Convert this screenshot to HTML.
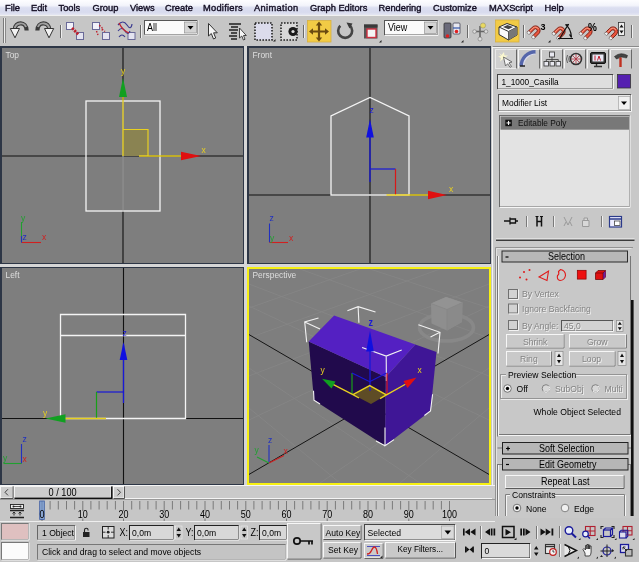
<!DOCTYPE html>
<html><head><meta charset="utf-8">
<style>
*{margin:0;padding:0;box-sizing:border-box}
html,body{width:639px;height:562px;overflow:hidden;background:#c6c6c6}
body{position:relative;filter:blur(.45px);font-family:"Liberation Sans",sans-serif;font-size:8.6px;color:#000}
.a{position:absolute;white-space:nowrap}
#menu{left:0;top:0;width:639px;height:15px;background:linear-gradient(#fdfdff 0%,#f3f4fb 36%,#dbdef0 52%,#d8dbee 82%,#e4e6f2 100%)}
#menu span{position:absolute;top:2.6px;font-size:9.3px;line-height:10px;color:#10101e;-webkit-text-stroke:.38px #140c24}
#tb{left:0;top:15px;width:639px;height:31px;background:#c6c6c6;border-top:1px solid #f0f0f0}
#vp{left:0;top:46px;width:491px;height:439px;background:#2d3646}
.v{position:absolute;background:#7e7e7e}
.vl{position:absolute;color:#dedede;font-size:8.4px;line-height:9px}
.sunk{border:1px solid;border-color:#3a3a3a #f4f4f4 #f4f4f4 #3a3a3a;background:#d6d6d6}
.btn{border:1px solid;border-color:#f6f6f6 #555 #555 #f6f6f6;background:#c8c8c8;text-align:center}
.dis{color:#838383;text-shadow:0.8px 0.8px 0 #f4f4f4}
.t{position:absolute;white-space:nowrap;line-height:10px;z-index:6;transform:scaleY(1.13);transform-origin:0 55%}
svg{position:absolute;left:0;top:0;overflow:visible}
</style></head><body>
<div class="a" id="menu">
<span style="left:5px">File</span><span style="left:31px">Edit</span><span style="left:58.5px">Tools</span><span style="left:92.5px">Group</span><span style="left:130px">Views</span><span style="left:165px">Create</span><span style="left:203px;letter-spacing:.25px">Modifiers</span><span style="left:254px;letter-spacing:.35px">Animation</span><span style="left:310px">Graph Editors</span><span style="left:378.5px">Rendering</span><span style="left:433px">Customize</span><span style="left:489px">MAXScript</span><span style="left:544.5px">Help</span>
</div>
<div class="a" id="tb"></div>
<svg width="639" height="562" viewBox="0 0 639 562" style="z-index:5">
<defs>
<linearGradient id="gArr" x1="0" y1="0" x2="0" y2="1"><stop offset="0" stop-color="#8a8a8a"/><stop offset="1" stop-color="#3a3a3a"/></linearGradient>

</defs>
<!-- grips -->
<path d="M3.5,18V43" stroke="#7a7a7a"/><path d="M5.5,18V43" stroke="#8a8a8a"/><path d="M4.5,18V43" stroke="#eee"/>
<!-- undo -->
<path d="M14.800,29.500 C14.800,21.300 26.600,20.800 26.600,30.500" fill="none" stroke="#3a3a3a" stroke-width="4.200"/>
<path d="M14.800,29.500 C14.800,22.300 24.500,21.500 26,27" fill="none" stroke="#a0a0a0" stroke-width="2"/>
<path d="M10.300,28.500 L19.500,28.500 L15,37.800 Z" fill="#f2f2f2" stroke="#333" stroke-width="1"/>
<!-- redo -->
<path d="M49.200,29.500 C49.200,21.300 37.400,20.800 37.400,30.500" fill="none" stroke="#3a3a3a" stroke-width="4.200"/>
<path d="M49.200,29.500 C49.200,22.300 39.500,21.500 38,27" fill="none" stroke="#a0a0a0" stroke-width="2"/>
<path d="M44.500,28.500 L53.700,28.500 L49,37.800 Z" fill="#f2f2f2" stroke="#333" stroke-width="1"/>
<path d="M60.5,25V38" stroke="#6a6a6a"/><path d="M61.5,25V38" stroke="#eee"/>
<!-- link -->
<rect x="66.500" y="22.500" width="7" height="7" fill="#f2f2fa" stroke="#6a6a98"/><rect x="76.500" y="32.500" width="7" height="7" fill="#e4e4f0" stroke="#6a6a98"/>
<path d="M72,28 L78.500,34.500" stroke="#c0202c" stroke-width="2.800" stroke-dasharray="2.200 1.100"/>
<!-- unlink -->
<rect x="92.500" y="22.500" width="7" height="7" fill="#f2f2fa" stroke="#6a6a98"/><rect x="102.500" y="32.500" width="7" height="7" fill="#e4e4f0" stroke="#6a6a98"/>
<path d="M99,25.500 q4,1 3,5 M96.500,31 l1.500,4 M102,29 l3,2.500" stroke="#c0202c" stroke-width="1.4" fill="none" stroke-dasharray="1.5 1.5"/>
<!-- bind -->
<rect x="128" y="32.500" width="7" height="7" fill="#e4e4f0" stroke="#6a6a98"/>
<path d="M118,25 q5,-6 9,0 t5,-1 M118,31 q4,-5 7,0 t5,0 M119,37 q3,-4 6,0" stroke="#3a3a90" stroke-width="1.2" fill="none"/>
<path d="M119,23 q4,8 10,10" stroke="#c0202c" stroke-width="1.3" fill="none"/>
<path d="M140.5,25V38" stroke="#6a6a6a"/><path d="M141.5,25V38" stroke="#eee"/>
<!-- All dropdown -->
<rect x="144.5" y="20.5" width="53" height="14" fill="#fafafa" stroke="#555"/><path d="M144.5,35H198V20" stroke="#f4f4f4" fill="none"/>
<rect x="184.5" y="22" width="12" height="11" fill="#d4d4d4" stroke="#888" stroke-width=".6"/><path d="M187.5,26 L193.5,26 L190.5,29.5Z" fill="#000"/>
<!-- select cursor -->
<path d="M208.5,23.5 L208.5,36 L211.3,33.5 L213.5,39 L215.7,38 L213.6,32.8 L217.3,32.8Z" fill="#f6f6f6" stroke="#333" stroke-width="1"/>
<!-- select by name -->
<path d="M229,24H241 M231,27H238 M229,30H238 M231,33H237 M229,36H237 M231,39H237" stroke="#222" stroke-width="1.6"/>
<path d="M239.5,28 L239.5,38 L241.8,36 L243.4,40 L245,39.3 L243.5,35.5 L246.3,35.5Z" fill="#f6f6f6" stroke="#333" stroke-width=".9"/>
<!-- rect region -->
<rect x="255" y="23" width="17" height="17" fill="#dcdcec" stroke="#222" stroke-width="1.6" stroke-dasharray="1.6 1.4"/>
<path d="M273,41.5l2.5,0l0,-2.5z" fill="#222"/>
<!-- window crossing -->
<rect x="281" y="23" width="16" height="17" fill="#d8d8d8" stroke="#222" stroke-width="1.6" stroke-dasharray="1.6 1.4"/>
<circle cx="293" cy="31.5" r="4.6" fill="#1a1a1a"/><circle cx="293" cy="31.5" r="1.6" fill="#ddd"/>
<path d="M303.5,25V38" stroke="#6a6a6a"/><path d="M304.5,25V38" stroke="#eee"/>
<!-- move (active) -->
<rect x="307.500" y="20.500" width="23.500" height="21.500" fill="#f2cb45" stroke="#d8b040" stroke-width=".8"/>
<g fill="#6a4a10" stroke="#6a4a10"><path d="M319,24V39 M311.500,31.500H326.500" stroke-width="2.2"/><path d="M319,21.500l3.200,4h-6.400z M319,41.500l3.200,-4h-6.400z M309,31.500l4,-3.200v6.400z M329,31.500l-4,-3.200v6.400z" stroke="none"/></g>
<!-- rotate -->
<path d="M350,25.800 A7,7 0 1 1 340.300,25.800" fill="none" stroke="#444" stroke-width="2.600"/>
<path d="M346.500,22.500 l6,1 l-3,5z" fill="#3a3a3a"/>
<!-- scale -->
<rect x="364" y="24.5" width="13.500" height="14" fill="#555"/><rect x="364" y="24.5" width="13.500" height="3" fill="#3a3a3a"/>
<rect x="367" y="29" width="9" height="8.500" fill="#f4f4f4" stroke="#d03040" stroke-width="1.4"/>
<path d="M379,42.500l2.500,0l0,-2.500z" fill="#222"/>
<!-- View dropdown -->
<rect x="384.500" y="20.500" width="53" height="14.500" fill="#fafafa" stroke="#555"/><path d="M384.500,35.500H438V20.500" stroke="#f4f4f4" fill="none"/>
<rect x="424.500" y="22" width="12" height="11.500" fill="#d4d4d4" stroke="#888" stroke-width=".6"/><path d="M427.500,26 L433.500,26 L430.500,29.500Z" fill="#000"/>
<!-- pivot center -->
<rect x="444" y="23" width="7" height="15" rx="1" fill="#6a6a7a" stroke="#333" stroke-width=".8"/><rect x="453" y="23" width="7" height="11" rx="1" fill="#e8e8f0" stroke="#445" stroke-width=".8"/>
<circle cx="447.500" cy="36" r="1.800" fill="#e02020"/><circle cx="456.500" cy="31.500" r="1.800" fill="#e02020"/><path d="M453,28h7" stroke="#35a" stroke-width="1.200"/>
<path d="M461,42.500l2.500,0l0,-2.500z" fill="#222"/>
<path d="M467.500,25V38" stroke="#6a6a6a"/><path d="M468.500,25V38" stroke="#eee"/>
<!-- manipulate -->
<path d="M480,26V38 M474,31.500H486" stroke="#666" stroke-width="1.600"/><circle cx="483" cy="25.500" r="2.600" fill="#e8d860" stroke="#886" stroke-width=".5"/><circle cx="480" cy="39" r="2" fill="#ddd" stroke="#666" stroke-width=".5"/><circle cx="474.500" cy="31.500" r="1.800" fill="#ddd" stroke="#666" stroke-width=".5"/><circle cx="486" cy="31.500" r="1.800" fill="#ddd" stroke="#666" stroke-width=".5"/>
<!-- kbd override (active) -->
<rect x="495.500" y="20" width="23.500" height="22" fill="#f2cb45" stroke="#d8b040" stroke-width=".8"/>
<path d="M499,27 L507,23.500 L517,27 L517,35 L508.500,40 L499,34.500Z" fill="#fafafa" stroke="#333" stroke-width="1"/>
<path d="M499,27 L508.500,31.500 L517,27 M508.500,31.500V40" fill="none" stroke="#333" stroke-width="1"/><path d="M508.500,31.500 L517,27 L517,35 L508.500,40Z" fill="#777"/><path d="M503,27 L507.500,25 L513,27 L508.500,29.200Z" fill="#444"/>
<path d="M523.500,25V38" stroke="#6a6a6a"/><path d="M524.500,25V38" stroke="#eee"/>
<!-- snaps -->
<g transform="translate(526,24.500)"><g transform="translate(9.5,6) rotate(45)"><path d="M-4.6,6.5 L-4.6,0 A4.6,4.6 0 0 1 4.6,0 L4.6,6.5 L1.7,6.5 L1.7,0 A1.7,1.7 0 0 0 -1.7,0 L-1.7,6.5 Z" fill="#e8553e" stroke="#7a1a10" stroke-width=".9"/><path d="M-3.400,4.800 L-3.400,0 A3.400,3.400 0 0 1 1,-3.200" fill="none" stroke="#f7a48c" stroke-width=".9"/><path d="M-4.600,5 h2.900 v2.600 h-2.900z M1.700,5 h2.900 v2.600 h-2.900z" fill="#f2f2f2" stroke="#666" stroke-width=".6"/></g></g><text x="540.500" y="30" font-size="9" font-weight="bold" font-family="Liberation Sans">3</text>
<path d="M548,42.500l2.500,0l0,-2.500z" fill="#222"/>
<g transform="translate(551,25.500)"><g transform="translate(9.5,6) rotate(45)"><path d="M-4.6,6.5 L-4.6,0 A4.6,4.6 0 0 1 4.6,0 L4.6,6.5 L1.7,6.5 L1.7,0 A1.7,1.7 0 0 0 -1.7,0 L-1.7,6.5 Z" fill="#e8553e" stroke="#7a1a10" stroke-width=".9"/><path d="M-3.400,4.800 L-3.400,0 A3.400,3.400 0 0 1 1,-3.200" fill="none" stroke="#f7a48c" stroke-width=".9"/><path d="M-4.600,5 h2.900 v2.600 h-2.900z M1.700,5 h2.900 v2.600 h-2.900z" fill="#f2f2f2" stroke="#666" stroke-width=".6"/></g></g><path d="M558,38.500H573 M560,38 L568.500,24 M565.500,24.500 q5.500,4 6,13 M565.500,24.500 l3.500,.5 M571.500,37.500 l-2,-3" stroke="#111" stroke-width="1.200" fill="none"/>
<g transform="translate(578,25.500)"><g transform="translate(9.5,6) rotate(45)"><path d="M-4.6,6.5 L-4.6,0 A4.6,4.6 0 0 1 4.6,0 L4.6,6.5 L1.7,6.5 L1.7,0 A1.7,1.7 0 0 0 -1.7,0 L-1.7,6.5 Z" fill="#e8553e" stroke="#7a1a10" stroke-width=".9"/><path d="M-3.400,4.800 L-3.400,0 A3.400,3.400 0 0 1 1,-3.200" fill="none" stroke="#f7a48c" stroke-width=".9"/><path d="M-4.600,5 h2.900 v2.600 h-2.900z M1.700,5 h2.900 v2.600 h-2.900z" fill="#f2f2f2" stroke="#666" stroke-width=".6"/></g></g><text x="588" y="30.500" font-size="10" font-weight="bold" font-family="Liberation Sans">%</text>
<g transform="translate(603.500,25.500)"><g transform="translate(9.5,6) rotate(45)"><path d="M-4.6,6.5 L-4.6,0 A4.6,4.6 0 0 1 4.6,0 L4.6,6.5 L1.7,6.5 L1.7,0 A1.7,1.7 0 0 0 -1.7,0 L-1.7,6.5 Z" fill="#e8553e" stroke="#7a1a10" stroke-width=".9"/><path d="M-3.400,4.800 L-3.400,0 A3.400,3.400 0 0 1 1,-3.200" fill="none" stroke="#f7a48c" stroke-width=".9"/><path d="M-4.600,5 h2.900 v2.600 h-2.900z M1.700,5 h2.900 v2.600 h-2.900z" fill="#f2f2f2" stroke="#666" stroke-width=".6"/></g></g><rect x="618.500" y="22.500" width="6" height="13" fill="#eee" stroke="#333" stroke-width=".8"/><path d="M619.500,27.500h4l-2,-3z M619.500,30.500h4l-2,3z" fill="#111"/>
<path d="M631.500,25V38" stroke="#6a6a6a"/><path d="M632.500,25V38" stroke="#eee"/>
</svg>
<div class="t" style="left:147px;top:23px;font-size:9px;z-index:6">All</div>
<div class="t" style="left:388px;top:23px;font-size:9px;z-index:6">View</div>
<div class="a" id="vp">
<div class="v" style="left:2px;top:2px;width:241px;height:215px"></div>
<div class="v" style="left:249px;top:2px;width:241px;height:215px"></div>
<div class="v" style="left:2px;top:222px;width:241px;height:216px"></div>
<div class="v" id="persp" style="left:249px;top:223px;width:240px;height:214px;outline:2px solid #f6f012"></div>
<div class="a" style="left:244px;top:0;width:3px;height:439px;background:#d6d6d6"></div>
<div class="a" style="left:0;top:218px;width:491px;height:3px;background:#d6d6d6"></div>
</div>
<svg width="639" height="562" viewBox="0 0 639 562" style="z-index:3">
<defs>
<clipPath id="cpP"><rect x="249" y="269" width="240" height="214"/></clipPath>
</defs>
<!-- ===== TOP ===== -->
<g>
<path d="M123,48V263 M2,156H243" stroke="#111" stroke-width="1.1"/>
<rect x="86" y="101" width="74" height="110" fill="none" stroke="#f4f4f4" stroke-width="1.3"/>
<path d="M123,101V211" stroke="#cfcfcf" stroke-width="1"/>
<rect x="123" y="129.500" width="25" height="26.500" fill="#8a8352"/>
<path d="M123,129.500H148V156" fill="none" stroke="#e8d020" stroke-width="1.200"/>
<path d="M123,156V96 M139,156H181" stroke="#e8d020" stroke-width="1.300"/>
<path d="M123,78 l4,19 h-8z" fill="#10a020"/>
<path d="M201,156 l-20,-4.300 v8.600z" fill="#e01010"/>
<!-- tripod -->
<path d="M21.500,242.500V222" stroke="#20a030" stroke-width="1.100"/><path d="M21.500,242.500H41" stroke="#d02020" stroke-width="1.100"/><path d="M21.500,242.500V236" stroke="#2030c0" stroke-width="1.100"/>
</g>
<!-- ===== FRONT ===== -->
<g>
<path d="M370,48V263 M249,195H490" stroke="#111" stroke-width="1.100"/>
<path d="M331,195V116 L370,97.500 L409,116 V195Z" fill="none" stroke="#f4f4f4" stroke-width="1.300"/>
<path d="M370,182V137" stroke="#1818d8" stroke-width="1.300"/>
<path d="M370,119 l3.800,18.500 h-7.600z" fill="#1010e0"/>
<path d="M370,169H395.500" stroke="#1818d8" stroke-width="1.200"/><path d="M395.500,169V195" stroke="#d81818" stroke-width="1.200"/>
<path d="M386.500,195H429" stroke="#e8d020" stroke-width="1.300"/>
<path d="M447,195 l-19,-4.200 v8.400z" fill="#e01010"/>
<path d="M269.500,242.500V223.500" stroke="#2030c0" stroke-width="1.100"/><path d="M269.500,242.500H288" stroke="#d02020" stroke-width="1.100"/>
</g>
<!-- ===== LEFT ===== -->
<g>
<path d="M123.500,268V484 M2,418.500H243" stroke="#111" stroke-width="1.100"/>
<path d="M60.500,418.500V314.500H185.500V418.500Z M60.500,335.500H185.500" fill="none" stroke="#f4f4f4" stroke-width="1.300"/>
<path d="M123.500,403V344" stroke="#1818d8" stroke-width="1.300"/>
<path d="M123.500,342 l3.800,18 h-7.600z" fill="#1010e0"/>
<path d="M96.500,392H123.500" stroke="#1818d8" stroke-width="1.200"/><path d="M96.500,392V418.500" stroke="#18a018" stroke-width="1.200"/>
<path d="M106,418.500H65" stroke="#e8d020" stroke-width="1.300"/>
<path d="M45.500,418.500 l20,-4.200 v8.400z" fill="#10a020"/>
<path d="M21.500,463.500V444" stroke="#2030c0" stroke-width="1.100"/><path d="M21.500,463.500H3.500" stroke="#20a030" stroke-width="1.100"/>
</g>
<!-- ===== PERSPECTIVE ===== -->
<g clip-path="url(#cpP)">
<!-- faint grid -->
<g stroke="#868686" stroke-width=".8" fill="none">
<path d="M249,306 L489,420 M249,284 L489,376 M300,269 L489,338 M249,368 L420,483 M249,408 L340,483 M370,269 L489,308"/>
<path d="M489,306 L249,420 M489,284 L249,376 M440,269 L249,338 M489,368 L320,483 M489,408 L400,483 M360,269 L249,308"/>
</g>
<path d="M248,334 L490,475 M248,475 L490,334" stroke="#151515" stroke-width="1"/>
<!-- viewcube -->
<ellipse cx="446.500" cy="327.500" rx="27" ry="13.500" fill="none" stroke="#888888" stroke-width="3.600"/>
<path d="M431,303.500 L446,297 L462.500,302.500 L462,322 L447,330.500 L431.500,323.500Z" fill="#8e8e8e"/>
<path d="M431,303.500 L446,297 L462.500,302.500 L447,309.500Z" fill="#939393"/>
<path d="M447,309.500 L462.500,302.500 L462,322 L447,330.500Z" fill="#8a8a8a"/>
<path d="M431,303.500 L447,309.500 L462.500,302.500 M447,309.500V330.500" stroke="#868686" fill="none" stroke-width=".8"/>
<!-- house -->
<path d="M308.700,341.400 L385.800,377 L385,445.700 L314,400.200Z" fill="#210a4c"/>
<path d="M385.800,377 L415.300,344.400 L436.500,352 L430.500,411 L385,445.700Z" fill="#3f1696"/>
<path d="M308.700,341.400 L334.100,315.500 L415.300,344.400 L385.800,377Z" fill="#5420c2"/>
<!-- brackets -->
<g stroke="#f2f2f2" stroke-width="1.100" fill="none">
<path d="M318.500,318 L304.700,321.900 L306.700,342.300 M304.700,321.900 L320,329"/>
<path d="M347.400,310.700 L358.100,306.700 L375.500,312 M358.100,306.700 L358.900,322.700"/>
<path d="M418.400,324.800 L440,332.300 L438,353.500 M440,332.300 L430.500,336.900"/>
<path d="M362.100,347.500 L386.200,356.100 L401.700,349.900 M386.200,356.100 L386.400,381"/>
<path d="M385,427.500 L385,445.700 L394,439.600 M385,445.700 L376,441"/>
<path d="M432.600,394.300 L430.500,411 L424.400,415.500"/>
<path d="M313.500,390.800 L314,400.200 L320,404"/>
</g>
<!-- gizmo -->
<path d="M352.900,394.600 L369.700,385.600 L386.400,394.900 L371,404Z" fill="#5e4c26"/>
<path d="M352,373V394" stroke="#18a018" stroke-width="1.200"/><path d="M352,373 L369.700,381.700 L386.600,373" stroke="#1818d8" stroke-width="1.200" fill="none"/><path d="M387,373V394" stroke="#d81818" stroke-width="1.200"/>
<path d="M370,391V340" stroke="#1818d8" stroke-width="1.300"/>
<path d="M370,330.500 l3.800,21 h-7.600z" fill="#1010e0"/>
<path d="M333,384.300 L352.900,394.600 L359,398 M352.900,394.600 L369.700,385.600 L386.400,394.900 L405.400,384.300 M386.400,394.900 L380,398.600" stroke="#e8d020" stroke-width="1.300" fill="none"/>
<path d="M416.500,377.400 L403.500,381 L407.500,388Z" fill="#e01010"/>
<path d="M322,378.800 L335.500,381.500 L331.500,388.500Z" fill="#10a020"/>
<!-- tripod -->
<path d="M269,463V445" stroke="#2030c0" stroke-width="1.100"/><path d="M269,463 L284,455.500" stroke="#d02020" stroke-width="1.100"/><path d="M269,463 L257,457" stroke="#20a030" stroke-width="1.100"/>
</g>
</svg>
<!-- viewport labels -->
<div class="vl" style="left:5.500px;top:50.500px">Top</div>
<div class="vl" style="left:252.500px;top:50.500px">Front</div>
<div class="vl" style="left:5.500px;top:271px">Left</div>
<div class="vl" style="left:252.500px;top:271px">Perspective</div>
<!-- axis letters -->
<div class="t" style="left:121px;top:65.500px;color:#e8d020;font-size:8.500px">y</div>
<div class="t" style="left:201.500px;top:144.500px;color:#e8d020;font-size:8.500px">x</div>
<div class="t" style="left:21px;top:213px;color:#20a030;font-size:8.500px">y</div>
<div class="t" style="left:22.500px;top:232px;color:#2030c0;font-size:8.500px">z</div>
<div class="t" style="left:42px;top:232px;color:#d02020;font-size:8.500px">x</div>
<div class="t" style="left:369.500px;top:104.500px;color:#1818d8;font-size:8.500px">z</div>
<div class="t" style="left:449px;top:184px;color:#e8d020;font-size:8.500px">x</div>
<div class="t" style="left:269.500px;top:212.500px;color:#2030c0;font-size:8.500px">z</div>
<div class="t" style="left:289px;top:232.500px;color:#d02020;font-size:8.500px">x</div>
<div class="t" style="left:270px;top:233px;color:#20a030;font-size:8.500px">y</div>
<div class="t" style="left:122.500px;top:327.500px;color:#1818d8;font-size:8.500px">z</div>
<div class="t" style="left:43px;top:407.500px;color:#e8d020;font-size:8.500px">y</div>
<div class="t" style="left:22.500px;top:433.500px;color:#2030c0;font-size:8.500px">z</div>
<div class="t" style="left:3px;top:453px;color:#20a030;font-size:8.500px">y</div>
<div class="t" style="left:22.500px;top:453.500px;color:#d02020;font-size:8.500px">x</div>
<div class="t" style="left:368.500px;top:317.500px;color:#1818d8;font-size:9px;font-weight:bold">z</div>
<div class="t" style="left:417.500px;top:365px;color:#e8d020;font-size:8.500px">x</div>
<div class="t" style="left:320.500px;top:365px;color:#e8d020;font-size:8.500px">y</div>
<div class="t" style="left:268px;top:434.500px;color:#2030c0;font-size:8.500px">z</div>
<div class="t" style="left:254.500px;top:445px;color:#20a030;font-size:8.500px">y</div>
<div class="t" style="left:283.500px;top:445.500px;color:#d02020;font-size:8.500px">x</div>
<!-- right command panel -->
<div class="a" style="left:492px;top:46px;width:147px;height:472px;background:#c8c8c8;border-left:1px solid #f2f2f2;border-top:1px solid #8a8a8a"></div>
<div class="a" style="left:493px;top:47px;width:146px;height:1px;background:#f4f4f4"></div>
<svg width="639" height="562" viewBox="0 0 639 562" style="z-index:4">
<!-- tabs -->
<g>
<rect x="495.500" y="49.500" width="21" height="19" fill="#d0d0d0" stroke="#e8e8e8"/><path d="M516.500,49.500V68.500" stroke="#666"/>
<g fill="none" stroke="#f4f4f4"><path d="M518.500,68.500V49.500H539.500"/><path d="M541.500,68.500V49.500H562.500"/><path d="M564.500,68.500V49.500H585.500"/><path d="M587.500,68.500V49.500H608.500"/><path d="M610.500,68.500V49.500H631.500"/></g>
<g fill="none" stroke="#6a6a6a"><path d="M539.500,49.500V68.500"/><path d="M562.500,49.500V68.500"/><path d="M585.500,49.500V68.500"/><path d="M608.500,49.500V68.500"/><path d="M631.500,49.500V68.500"/></g>
<!-- create icon: cursor with star -->
<path d="M499,53 l2.500,2 l2.500,-3 l.5,3.500 l3.500,0 l-3,2 l1,3 l-3,-1.500 l-3,2.500 l1,-3.500 l-3,-1.500 l3,-.5z" fill="#fbf8d0"/>
<path d="M503.500,57 L512,62 L509,62.800 L511.500,66.500 L510,67.300 L507.700,63.700 L505.500,66Z" fill="#f4f4f4" stroke="#555" stroke-width=".8"/>
<!-- modify icon: arc -->
<path d="M521.500,66 A14,14 0 0 1 535.500,52" fill="none" stroke="#56a" stroke-width="4"/><path d="M523.500,66 A12,12 0 0 1 535.500,54" fill="none" stroke="#dde" stroke-width="1.200"/><path d="M520,66h5" stroke="#222" stroke-width="1.500"/>
<!-- hierarchy -->
<g fill="#e8e8f0" stroke="#444" stroke-width=".9"><rect x="549.500" y="52" width="5" height="5"/><rect x="544" y="61.500" width="4.500" height="4.500"/><rect x="550" y="61.500" width="4.500" height="4.500"/><rect x="556" y="61.500" width="4.500" height="4.500"/></g><path d="M552,57V59.500 M546.300,61.500V59.500H558.300V61.500 M552,59.500V61.500" stroke="#444" stroke-width=".9" fill="none"/>
<!-- motion -->
<circle cx="576" cy="59" r="5.500" fill="#ddd" stroke="#333" stroke-width="1.600"/><path d="M576,54V64 M571,59H581 M572.500,55.500l7,7 M579.500,55.500l-7,7" stroke="#b03040" stroke-width=".8"/><path d="M567.500,55 q-2,4 0,8 M569.500,56 q-1.500,3 0,6" stroke="#444" stroke-width=".8" fill="none"/>
<!-- display -->
<rect x="590.500" y="52.500" width="15" height="11" rx="1.500" fill="#333" stroke="#111"/><rect x="592.500" y="54.500" width="11" height="7" fill="#e8e8f4"/><path d="M595,55.500v5 M597.500,60.500l1.500,-4.500l1.500,4.500" stroke="#c02030" stroke-width="1" fill="none"/><path d="M594,66.500h8 M596.500,64v2" stroke="#333" stroke-width="1.400"/>
<!-- utilities hammer -->
<path d="M614.500,56.500 q6,-5 13,-1 l-1,2.500 q-5,-2.500 -10,1z" fill="#444" stroke="#222" stroke-width=".6"/><path d="M620.500,57.500V67" stroke="#c03020" stroke-width="2.400"/>
</g>
<!-- name field -->
<rect x="497.500" y="74.500" width="115.500" height="14" fill="#dedede" stroke="#444"/><path d="M498,89H613.500V74.500" stroke="#f6f6f6" fill="none"/>
<rect x="617.500" y="74.500" width="13" height="13.500" fill="#5520b0" stroke="#333" stroke-width=".8"/>
<!-- modifier list -->
<rect x="498.500" y="94.500" width="132.500" height="16.500" fill="#e6e6e6" stroke="#555"/><path d="M498.500,111.500H631.500V94.500" stroke="#f6f6f6" fill="none"/>
<rect x="618.500" y="96.500" width="11.500" height="13" fill="#f0f0f0" stroke="#999" stroke-width=".6"/><path d="M621,101.500h6l-3,3.500z" fill="#000"/>
<!-- stack -->
<rect x="499.500" y="115.500" width="130" height="91.500" fill="#e3e3e3" stroke="#6a6a6a"/><path d="M499.500,207.500H630V115.500" stroke="#f6f6f6" fill="none"/>
<rect x="500.500" y="116.500" width="128.500" height="13.200" fill="#787878"/>
<rect x="505.300" y="119.700" width="6.500" height="6.500" fill="#111"/><path d="M506.500,122.950h4.100 M508.550,120.900v4.100" stroke="#fff" stroke-width="1"/>
<!-- stack buttons -->
<path d="M504,221h6 M510,217.500v7 M510,219h5.500v4H510 M515.500,221H518" stroke="#111" stroke-width="1.300" fill="none"/>
<path d="M526.500,216V227 M553.500,216V227 M601.500,216V227" stroke="#7a7a7a"/><path d="M527.500,216V227 M554.500,216V227 M602.500,216V227" stroke="#eee"/>
<path d="M537,216.500V226.500 M541.500,216.500V226.500 M537,221.500h4.500" stroke="#111" stroke-width="1.500"/><path d="M535.500,216.500h3 M540,216.500h3" stroke="#111" stroke-width="1"/>
<path d="M564,217 l4,8 l4,-8 M566,222 l-2,4 M570,222 l2,4" stroke="#9a9a9a" stroke-width="1" fill="none"/>
<path d="M582.500,220.500h6.500v6h-6.500z M584,220.500v-2.500h3.500v2.500" stroke="#9a9a9a" stroke-width="1" fill="#d8d8d8"/>
<rect x="609.500" y="216.500" width="12" height="10.500" fill="#eef" stroke="#2a3a8a" stroke-width="1.200"/><path d="M609.500,219h12" stroke="#2a3a8a" stroke-width="1.500"/><rect x="614.500" y="221" width="5.500" height="4.500" fill="#fff" stroke="#444" stroke-width=".8"/>
<!-- divider -->
<path d="M496,240.200H634.500" stroke="#3a3a3a" stroke-width="1.600"/><path d="M496,238.700H634.500" stroke="#e4e4e4"/>
<!-- rollouts frame -->
<path d="M495.500,516V247.500H633" fill="none" stroke="#939393"/><path d="M496.500,516V248.500H631.500" fill="none" stroke="#e2e2e2"/>
<path d="M498.500,256V435.500H631" fill="none" stroke="#f4f4f4"/><path d="M497.500,256V436.500 M499,434.500H630.500V256" fill="none" stroke="#777"/>
<path d="M498.500,464V516" fill="none" stroke="#f4f4f4"/><path d="M497.500,464V516 M630.500,464V516" fill="none" stroke="#777"/>
<path d="M497.500,448H502 M628,448H631 M497.500,464.500H502 M628,464.500H631" stroke="#777"/>
<!-- Selection header -->
<rect x="502" y="251" width="125.500" height="11" fill="#b8b8b8" stroke="#2a2a2a"/>
<path d="M505.500,257h3" stroke="#000" stroke-width="1.200"/>
<!-- subobject icons -->
<g fill="#e01818"><circle cx="520" cy="277.500" r="1"/><circle cx="524" cy="272" r="1"/><circle cx="526.500" cy="279.500" r="1"/><circle cx="529.500" cy="270" r="1"/></g>
<path d="M539,277 L548.500,271 L547,280.500Z" fill="none" stroke="#e01818" stroke-width="1.100"/>
<path d="M560.500,269.500 q5,1 5,6 q-1,5 -5.500,5 q-3.500,-1 -2.500,-5 q2,-1 1,-4z" fill="none" stroke="#e01818" stroke-width="1.100"/>
<rect x="577.300" y="270.300" width="8.800" height="8.800" fill="#ee1010" stroke="#800" stroke-width=".7"/>
<path d="M595.500,273 L598,270.500 L605.500,270.500 L605.500,277 L603,279.500 L595.500,279.500Z" fill="#e01010" stroke="#600" stroke-width=".7"/><path d="M603,273 L605.500,270.500 L605.500,277 L603,279.500Z" fill="#7020a0"/><path d="M595.500,273H603V279.500 M603,273L605.500,270.500" stroke="#600" stroke-width=".6" fill="none"/>
<!-- checkboxes -->
<g fill="#d2d2d2" stroke="#707070"><rect x="508.500" y="289.500" width="9" height="9"/><rect x="508.500" y="304" width="9" height="9"/><rect x="508.500" y="320.500" width="9" height="9"/></g>
<g fill="none" stroke="#f2f2f2"><path d="M509,299.500H518.500V289.500"/><path d="M509,314H518.500V304"/><path d="M509,330.500H518.500V320.500"/></g>
<!-- by angle field -->
<rect x="561.500" y="320.500" width="51.500" height="10.500" fill="#d2d2d2" stroke="#555"/><path d="M561.500,331.500H613.500V320.500" stroke="#f4f4f4" fill="none"/>
<g id="spA"><rect x="616.500" y="320.500" width="6.500" height="11" fill="#e6e6e6" stroke="#8a8a8a" stroke-width=".7"/><path d="M617.800,324.800h4l-2,-3z M617.800,327.200h4l-2,3z" fill="#111"/></g>
<!-- buttons -->
<g fill="#c9c9c9" stroke="#f6f6f6"><rect x="506.500" y="334.500" width="57" height="13"/><rect x="569.500" y="334.500" width="56.500" height="13"/><rect x="506.500" y="351.500" width="44.500" height="14"/><rect x="569.500" y="351.500" width="45" height="14"/></g>
<g fill="none" stroke="#7c7c7c"><path d="M506.500,348H564V334.500"/><path d="M569.500,348H626.500V334.500"/><path d="M506.500,366H551.500V351.500"/><path d="M569.500,366H615V351.500"/></g>
<g><rect x="555" y="351.500" width="8" height="14" fill="#e6e6e6" stroke="#8a8a8a" stroke-width=".7"/><path d="M557,357h4l-2,-3.500z M557,360h4l-2,3.500z" fill="#111"/></g>
<g><rect x="618" y="351.500" width="8" height="14" fill="#e6e6e6" stroke="#8a8a8a" stroke-width=".7"/><path d="M620,357h4l-2,-3.500z M620,360h4l-2,3.500z" fill="#111"/></g>
<!-- preview selection group -->
<rect x="501.500" y="375.500" width="126" height="24" fill="none" stroke="#ececec"/><rect x="500.500" y="374.500" width="126" height="24" fill="none" stroke="#949494"/>
<rect x="506" y="370" width="70" height="10" fill="#c8c8c8"/>
<g><circle cx="507.500" cy="388.500" r="3.800" fill="#f4f4f4" stroke="#666" stroke-width=".9"/><circle cx="507.500" cy="388.500" r="1.700" fill="#000"/></g>
<circle cx="546" cy="388.500" r="3.800" fill="#d8d8d8" stroke="#777" stroke-width=".9"/><path d="M543.300,391.200 a3.800,3.800 0 0 0 5.400,-5.400" stroke="#f6f6f6" fill="none" stroke-width=".9"/>
<circle cx="595.500" cy="388.500" r="3.800" fill="#d8d8d8" stroke="#777" stroke-width=".9"/><path d="M592.800,391.200 a3.800,3.800 0 0 0 5.400,-5.400" stroke="#f6f6f6" fill="none" stroke-width=".9"/>
<!-- Soft Selection / Edit Geometry headers -->
<rect x="502.500" y="442.500" width="125.500" height="11.500" fill="#b6b6b6" stroke="#222"/><path d="M506,448.500h4 M508,446.500v4" stroke="#000" stroke-width="1.200"/>
<rect x="502.500" y="458.500" width="125.500" height="11.500" fill="#b6b6b6" stroke="#222"/><path d="M506,464.500h3" stroke="#000" stroke-width="1.200"/>
<!-- repeat last -->
<rect x="505.500" y="475.500" width="118" height="12.500" fill="#c9c9c9" stroke="#f6f6f6"/><path d="M505.500,488.500H624V475.500" fill="none" stroke="#5a5a5a"/>
<!-- constraints group -->
<path d="M506.500,516V495.500H625.500V516" fill="none" stroke="#f4f4f4"/><path d="M505.500,516V494.500H624.500V516" fill="none" stroke="#808080"/>
<rect x="510" y="490" width="44" height="10" fill="#c8c8c8"/>
<g><circle cx="517" cy="508" r="3.800" fill="#f4f4f4" stroke="#666" stroke-width=".9"/><circle cx="517" cy="508" r="1.700" fill="#000"/></g>
<circle cx="565" cy="508" r="3.800" fill="#f0f0f0" stroke="#777" stroke-width=".9"/>
<!-- scroll thumb -->
<rect x="631" y="300" width="2.600" height="216" fill="#111"/>
</svg>
<div class="t" style="left:501.500px;top:77px;z-index:6;font-size:8.300px">1_1000_Casilla</div>
<div class="t" style="left:502px;top:98px;z-index:6;font-size:8.400px">Modifier List</div>
<div class="t" style="left:518px;top:118px;z-index:6;font-size:8.300px;color:#111">Editable Poly</div>
<div class="t" style="left:548px;top:251.800px;z-index:6;font-size:9px">Selection</div>
<div class="t dis" style="left:522px;top:289px;z-index:6">By Vertex</div>
<div class="t dis" style="left:522px;top:303.800px;z-index:6">Ignore Backfacing</div>
<div class="t dis" style="left:522px;top:320.500px;z-index:6">By Angle:</div>
<div class="t dis" style="left:564px;top:320.500px;z-index:6">45,0</div>
<div class="t dis" style="left:523px;top:336.500px;z-index:6">Shrink</div>
<div class="t dis" style="left:587px;top:336.500px;z-index:6">Grow</div>
<div class="t dis" style="left:520px;top:354px;z-index:6">Ring</div>
<div class="t dis" style="left:582px;top:354px;z-index:6">Loop</div>
<div class="t" style="left:508px;top:370px;z-index:6">Preview Selection</div>
<div class="t" style="left:516.500px;top:384px;z-index:6">Off</div>
<div class="t dis" style="left:555px;top:384px;z-index:6">SubObj</div>
<div class="t dis" style="left:604.500px;top:384px;z-index:6">Multi</div>
<div class="t" style="left:533.500px;top:407px;z-index:6">Whole Object Selected</div>
<div class="t" style="left:539px;top:443.500px;z-index:6;font-size:9px">Soft Selection</div>
<div class="t" style="left:539px;top:459.500px;z-index:6;font-size:9px">Edit Geometry</div>
<div class="t" style="left:541px;top:477px;z-index:6;font-size:9px">Repeat Last</div>
<div class="t" style="left:512px;top:490px;z-index:6">Constraints</div>
<div class="t" style="left:526px;top:503.500px;z-index:6">None</div>
<div class="t" style="left:574px;top:503.500px;z-index:6">Edge</div>
<!-- bottom -->
<div class="a" style="left:0;top:485px;width:495px;height:14px;background:#cacaca;border-top:1px solid #f4f4f4"></div>
<div class="a" style="left:0;top:499px;width:495px;height:22px;background:#c6c6c6"></div>
<div class="a" style="left:0;top:518px;width:639px;height:44px;background:#c6c6c6"></div>
<svg width="639" height="562" viewBox="0 0 639 562" style="z-index:4">
<!-- time slider -->
<rect x=".5" y="486.500" width="12" height="11.500" fill="#cdcdcd" stroke="#f4f4f4"/><path d="M.5,498.500H13V486.500" fill="none" stroke="#555"/>
<path d="M8,489.200 L5,492.300 L8,495.400" fill="none" stroke="#333" stroke-width=".9"/>
<rect x="14.500" y="486.500" width="96.500" height="11" fill="#cdcdcd" stroke="#f4f4f4"/><path d="M14.500,498.300H111.800V486.500" fill="none" stroke="#111" stroke-width="1.500"/>
<rect x="113.500" y="486.500" width="10.500" height="11.500" fill="#cdcdcd" stroke="#f4f4f4"/><path d="M113.500,498.500H124.500V486.500" fill="none" stroke="#555"/>
<path d="M117.500,489.200 L120.500,492.300 L117.500,495.400" fill="none" stroke="#333" stroke-width=".9"/>
<path d="M125,498.500H492" stroke="#f4f4f4"/>
<!-- trackbar -->
<path d="M0,499.500H495" stroke="#9a9a9a"/>
<path d="M42.0,501V511 M42.0,518.5V521 M50.1,501V509.5 M58.3,501V509.5 M66.5,501V509.5 M74.6,501V509.5 M82.8,501V511 M82.8,518.5V521 M90.9,501V509.5 M99.1,501V509.5 M107.2,501V509.5 M115.4,501V509.5 M123.5,501V511 M123.5,518.5V521 M131.7,501V509.5 M139.8,501V509.5 M147.9,501V509.5 M156.1,501V509.5 M164.2,501V511 M164.2,518.5V521 M172.4,501V509.5 M180.6,501V509.5 M188.7,501V509.5 M196.8,501V509.5 M205.0,501V511 M205.0,518.5V521 M213.2,501V509.5 M221.3,501V509.5 M229.5,501V509.5 M237.6,501V509.5 M245.8,501V511 M245.8,518.5V521 M253.9,501V509.5 M262.1,501V509.5 M270.2,501V509.5 M278.4,501V509.5 M286.5,501V511 M286.5,518.5V521 M294.6,501V509.5 M302.8,501V509.5 M310.9,501V509.5 M319.1,501V509.5 M327.2,501V511 M327.2,518.5V521 M335.4,501V509.5 M343.6,501V509.5 M351.7,501V509.5 M359.9,501V509.5 M368.0,501V511 M368.0,518.5V521 M376.2,501V509.5 M384.3,501V509.5 M392.4,501V509.5 M400.6,501V509.5 M408.8,501V511 M408.8,518.5V521 M416.9,501V509.5 M425.1,501V509.5 M433.2,501V509.5 M441.4,501V509.5 M449.5,501V511 M449.5,518.5V521" stroke="#7a7a7a" stroke-width="1"/>
<rect x="39.700" y="501" width="4.600" height="18.500" fill="rgba(90,140,220,.55)" stroke="#3a5aa0" stroke-width=".8"/>
<!-- mini curve editor icon -->
<rect x="10.500" y="504.500" width="13" height="4" fill="#eee" stroke="#222" stroke-width=".9"/><path d="M13,506.500h8" stroke="#222" stroke-width=".8"/><circle cx="13.500" cy="506.500" r="1" fill="#222"/><circle cx="20.500" cy="506.500" r="1" fill="#222"/>
<path d="M10,510.500h14 M10,517.500h14" stroke="#222" stroke-width="1.500"/><path d="M14,515.500v-3.500 M12.500,513.500l1.500,-1.500l1.500,1.500 M20,515.500v-3.500 M18.500,513.500l1.500,-1.500l1.500,1.500" stroke="#222" stroke-width=".9" fill="none"/>
<!-- status left boxes -->
<rect x="1.500" y="523.500" width="27" height="16" fill="#dfc0c0" stroke="#777"/><path d="M1.500,540H29V523.500" stroke="#f6f6f6" fill="none"/>
<rect x="1.500" y="542.500" width="27" height="17" fill="#fbfbfb" stroke="#777"/><path d="M1.500,560H29V542.500" stroke="#f6f6f6" fill="none"/>
<path d="M0,521.500H495" stroke="#eee"/>
<!-- 1 Object box -->
<rect x="37.500" y="525.500" width="37.500" height="14" fill="#c2c2c2" stroke="#666"/><path d="M37.500,540H75.500V525.500" stroke="#f6f6f6" fill="none"/>
<!-- lock -->
<rect x="83" y="532" width="6.500" height="5" fill="#222"/><path d="M84.500,532v-2a1.800,1.800 0 0 1 3.600,0v.5" fill="none" stroke="#222" stroke-width="1.100"/>
<!-- abs/rel -->
<rect x="102.500" y="526.500" width="11.500" height="11.500" fill="#dcdcdc" stroke="#222"/><path d="M108.200,526.500v3 M108.200,535v3 M102.500,532.200h3 M111,532.200h3" stroke="#222" stroke-width=".9"/><circle cx="108.200" cy="532.200" r="1.400" fill="#222"/>
<!-- XYZ fields -->
<g fill="#d8d8d8" stroke="#222"><rect x="129.500" y="525.500" width="44" height="14"/><rect x="194.500" y="525.500" width="44" height="14"/><rect x="259.500" y="525.500" width="27" height="14"/></g>
<g fill="none" stroke="#f6f6f6"><path d="M130,540H174V525.500"/><path d="M195,540H239V525.500"/><path d="M260,540H287V525.500"/></g>
<g fill="#111"><path d="M176.500,531h4.500l-2.250,-3.500z M176.500,534h4.500l-2.250,3.500z"/><path d="M242,531h4.500l-2.250,-3.500z M242,534h4.500l-2.250,3.500z"/></g>
<rect x="175.500" y="526" width="6.500" height="13" fill="none" stroke="#eee" stroke-width=".6"/><rect x="241" y="526" width="6.500" height="13" fill="none" stroke="#eee" stroke-width=".6"/>
<!-- prompt line -->
<rect x="37.500" y="544.500" width="248" height="15" fill="#c4c4c4" stroke="#777"/><path d="M37.500,560H286V544.500" stroke="#f4f4f4" fill="none"/>
<!-- key button -->
<rect x="287.500" y="523.500" width="33" height="35" fill="#c8c8c8" stroke="#f6f6f6"/><path d="M287.500,559H321V523.500" fill="none" stroke="#555"/>
<circle cx="297" cy="541" r="3.200" fill="none" stroke="#111" stroke-width="1.700"/><path d="M300,541H313 M309,541v3.500 M312,541v3.500" stroke="#111" stroke-width="1.700"/>
<!-- auto key / set key -->
<rect x="323.500" y="525.500" width="37" height="13.500" fill="#c9c9c9" stroke="#f6f6f6"/><path d="M323.500,539.500H361V525.500" fill="none" stroke="#555"/>
<rect x="323.500" y="542.500" width="37" height="15" fill="#c9c9c9" stroke="#f6f6f6"/><path d="M323.500,558H361V542.500" fill="none" stroke="#555"/>
<!-- selected dropdown -->
<rect x="364.500" y="524.500" width="90.500" height="15.500" fill="#dcdcdc" stroke="#444"/><path d="M364.500,540.500H455.500V524.500" stroke="#f6f6f6" fill="none"/>
<rect x="441.500" y="526" width="12.500" height="12.500" fill="#dadada" stroke="#999" stroke-width=".6"/><path d="M444.500,530.500h6.500l-3.250,4z" fill="#000"/>
<!-- key mode icon -->
<rect x="364.500" y="543.500" width="18" height="14.500" fill="#cbcbcb" stroke="#f6f6f6"/><path d="M364.500,558.500H383V543.500" fill="none" stroke="#666"/>
<path d="M367,546.500h13 M367,555.500h13" stroke="#4a50c0" stroke-width="1"/><path d="M367,554 q3,0 4.500,-3.500 t3,-3.500 q2,0 3,7" stroke="#d02020" stroke-width="1.300" fill="none"/>
<path d="M380,558l2.500,0l0,-2.500z" fill="#222"/>
<!-- key filters -->
<rect x="385.500" y="542.500" width="69.500" height="15" fill="#c9c9c9" stroke="#f6f6f6"/><path d="M385.500,558H455.500V542.500" fill="none" stroke="#555"/>
<!-- playback row1 -->
<g fill="#111">
<path d="M463,528.500h1.600v7h-1.600z M464.800,532 l5.200,-3.500v7z M470.300,532 l5.200,-3.500v7z"/>
<path d="M485,532 l5,-3.500v7z M490.800,528.500h1.700v7h-1.700z M493.500,528.500h1.700v7h-1.700z"/>
<path d="M505.500,529 l5.500,3.200 l-5.500,3.200z"/>
<path d="M530.500,532 l-5,-3.500v7z M523,528.500h1.700v7h-1.700z M520.300,528.500h1.700v7h-1.700z"/>
<path d="M540.500,528.500 l5.200,3.500 l-5.200,3.500z M545.700,528.500 l5.200,3.500 l-5.200,3.500z M551.500,528.500h1.800v7h-1.800z"/>
</g>
<rect x="502.500" y="526.500" width="11.500" height="11" fill="none" stroke="#111" stroke-width="1.500"/><path d="M514,540l2.500,0l0,-2.500z" fill="#222"/>
<path d="M480.500,526V539 M536.500,526V539 M559.500,526V538 M559.500,544V557" stroke="#777"/><path d="M481.500,526V539 M537.500,526V539 M560.500,526V538 M560.500,544V557" stroke="#eee"/>
<!-- playback row2 -->
<path d="M465,546.500h1.400v6h-1.400z M472.500,546.500h1.400v6h-1.400z M469.500,549.500 l-3,-2.500v5z M469.500,549.500 l3,-2.500v5z" fill="#111"/>
<rect x="481.500" y="543.500" width="48.500" height="14.500" fill="#dadada" stroke="#222"/><path d="M482,558.500H530.500V543.500" stroke="#f6f6f6" fill="none"/>
<path d="M534,549.500h4.500l-2.250,-3.500z M534,552.500h4.500l-2.250,3.500z" fill="#111"/>
<!-- time config -->
<rect x="545.500" y="544.500" width="9" height="9" fill="#e8e8e8" stroke="#333" stroke-width="1.100"/><path d="M545.500,546.500h9" stroke="#333" stroke-width="1.500"/><circle cx="553" cy="552" r="3.300" fill="#f4f4f4" stroke="#c02020" stroke-width="1.200"/><path d="M553,550v2h1.500" stroke="#222" stroke-width=".8" fill="none"/>
<!-- nav icons row1 -->
<circle cx="569" cy="530.500" r="3.800" fill="#e8eefc" stroke="#1a1a9a" stroke-width="1.400"/><path d="M571.800,533.500 L576,537.500" stroke="#1a1a9a" stroke-width="2"/>
<g fill="none" stroke="#b02030" stroke-width="1.100"><rect x="585.500" y="526.500" width="9.500" height="9"/><path d="M590.200,526.500v9 M585.500,531h9.500"/></g><circle cx="585.500" cy="534" r="2.800" fill="#e8eefc" stroke="#1a1a9a" stroke-width="1.200"/><path d="M587.500,536 L590,538.500" stroke="#1a1a9a" stroke-width="1.500"/>
<g fill="none" stroke="#1a1a9a" stroke-width="1.200"><rect x="603.500" y="530" width="7" height="6.500"/><path d="M603.500,530 l2,-2 h7 v6.500 l-2,2 M610.500,530 l2,-2"/></g><path d="M601,529v-2.500h2.500 M611.500,526.500h2.500v2.500 M614,535v2.500h-2.500 M603.500,537.500H601v-2.500" stroke="#222" stroke-width="1.100" fill="none"/>
<g fill="none" stroke="#b02030" stroke-width="1.100"><rect x="623" y="526.500" width="9" height="8.500"/><path d="M627.500,526.500v8.500 M623,530.700h9"/></g><g fill="#dde" stroke="#1a1a9a" stroke-width="1.100"><rect x="619.500" y="532" width="6.500" height="6"/><path d="M619.500,532 l1.800,-1.800 h6.500 v6 l-1.800,1.800" fill="none"/></g>
<path d="M578.500,540l2,0l0,-2z M596,540l2,0l0,-2z M614.500,540l2,0l0,-2z M632.500,540l2,0l0,-2z M596,558.500l2,0l0,-2z M614,558.500l2,0l0,-2z M577,558.500l2,0l0,-2z" fill="#222"/>
<!-- nav icons row2 -->
<path d="M564.500,544.500 L576.500,550.500 L564.500,556.500" fill="#e8e8e8" stroke="#111" stroke-width="1.400"/><path d="M568.500,547 q3,3.500 0,7" stroke="#111" stroke-width="1" fill="none"/>
<path d="M585,553 l-2,-3.500 l1,-1 l1.500,1.500 v-4.500 h1.400 v3.500 v-4.500 h1.400 v4.500 v-4 h1.400 v4 v-3 h1.400 v6 q0,2.500 -1.500,4 h-4.500z" fill="#f6f6f6" stroke="#222" stroke-width=".8"/>
<circle cx="607" cy="551" r="4" fill="none" stroke="#1a1a9a" stroke-width="1.200"/><path d="M607,544.500V557 M600.500,551H613.500" stroke="#222" stroke-width="1"/><path d="M601.500,555l1.500,2h-3z M612,549l2,1.500l-2,1.500z" fill="#222"/>
<rect x="620.500" y="544.500" width="8" height="8" fill="#dde" stroke="#1a1a9a" stroke-width="1.300"/><rect x="625.500" y="549.500" width="6.500" height="6.500" fill="#bbb" stroke="#333" stroke-width="1.100"/><path d="M623,547l4,4 M623,547h2.500 M623,547v2.500" stroke="#222" stroke-width=".9" fill="none"/>
</svg>
<div class="t" style="left:48.500px;top:487.500px;z-index:6;font-size:9.200px">0 / 100</div>

<div class="t" style="left:32.0px;width:20px;text-align:center;top:510px;font-size:9px">0</div>
<div class="t" style="left:72.8px;width:20px;text-align:center;top:510px;font-size:9px">10</div>
<div class="t" style="left:113.5px;width:20px;text-align:center;top:510px;font-size:9px">20</div>
<div class="t" style="left:154.2px;width:20px;text-align:center;top:510px;font-size:9px">30</div>
<div class="t" style="left:195.0px;width:20px;text-align:center;top:510px;font-size:9px">40</div>
<div class="t" style="left:235.8px;width:20px;text-align:center;top:510px;font-size:9px">50</div>
<div class="t" style="left:276.5px;width:20px;text-align:center;top:510px;font-size:9px">60</div>
<div class="t" style="left:317.2px;width:20px;text-align:center;top:510px;font-size:9px">70</div>
<div class="t" style="left:358.0px;width:20px;text-align:center;top:510px;font-size:9px">80</div>
<div class="t" style="left:398.8px;width:20px;text-align:center;top:510px;font-size:9px">90</div>
<div class="t" style="left:439.5px;width:20px;text-align:center;top:510px;font-size:9px">100</div>
<div class="t" style="left:42px;top:528px;z-index:6">1 Object</div>
<div class="t" style="left:119.500px;top:528px;z-index:6;font-size:9px">X:</div>
<div class="t" style="left:132px;top:528px;z-index:6">0,0m</div>
<div class="t" style="left:185.500px;top:528px;z-index:6;font-size:9px">Y:</div>
<div class="t" style="left:197px;top:528px;z-index:6">0,0m</div>
<div class="t" style="left:250.500px;top:528px;z-index:6;font-size:9px">Z:</div>
<div class="t" style="left:262px;top:528px;z-index:6">0,0m</div>
<div class="t" style="left:42px;top:547px;z-index:6">Click and drag to select and move objects</div>
<div class="t" style="left:325.500px;top:527.500px;z-index:6">Auto Key</div>
<div class="t" style="left:328px;top:545px;z-index:6">Set Key</div>
<div class="t" style="left:367.500px;top:527.500px;z-index:6">Selected</div>
<div class="t" style="left:397.500px;top:545px;z-index:6;font-size:8.200px">Key Filters...</div>
<div class="t" style="left:484.500px;top:546px;z-index:6">0</div>
</body></html>
